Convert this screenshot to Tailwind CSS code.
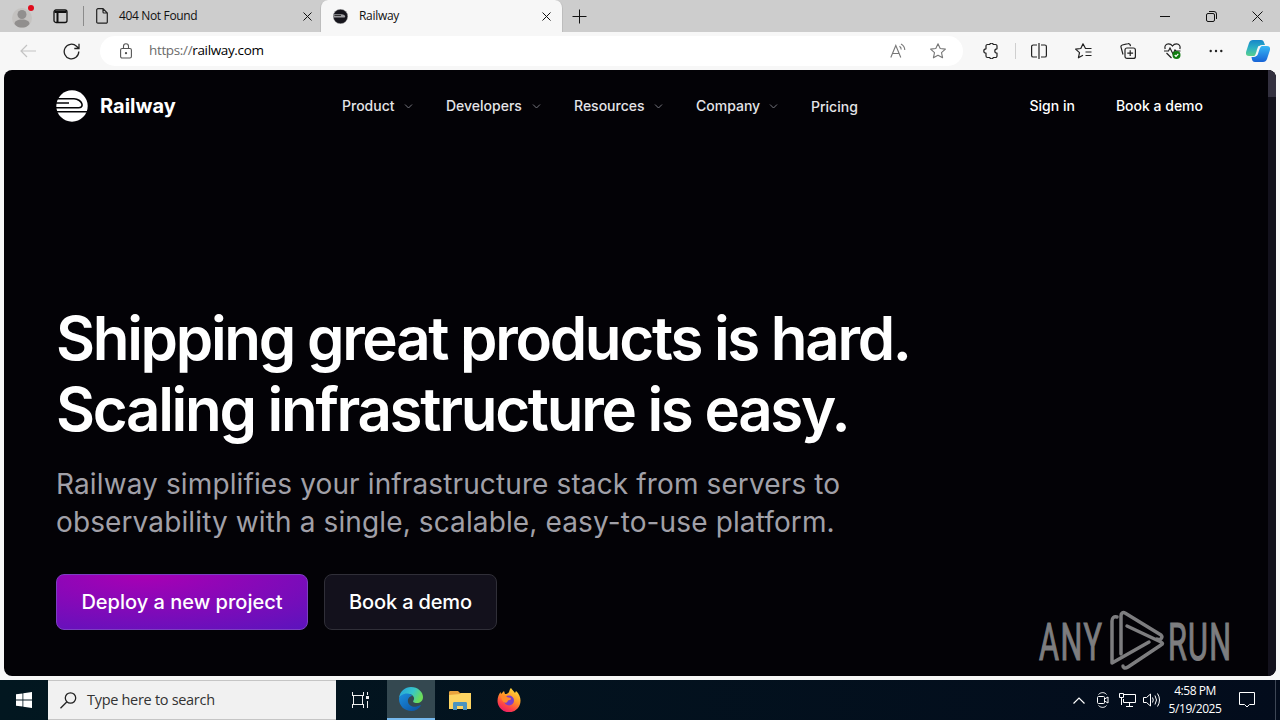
<!DOCTYPE html>
<html lang="en">
  <head>
    <meta charset="UTF-8" />
    <meta name="viewport" content="width=device-width, initial-scale=1.0" />
    <script src="https://cdn.jsdelivr.net/npm/@tailwindcss/browser@4"></script>
    <title>Railway</title>
  </head>
  <body class="flex flex-col w-[1280px] h-[720px] overflow-hidden bg-[#f7f7f7] font-['Open_Sans','Noto_Sans',sans-serif] text-[#111]">
    <!-- tab strip -->
    <div class="flex h-8 bg-[#cdcdcd] text-[12px] shrink-0">
      <div class="flex items-center w-[82px] pl-3 border-r border-transparent">
        <svg class="w-6 h-7" viewBox="0 0 24 28" fill="none">
          <circle cx="10" cy="16" r="10" fill="#c4c2c0" />
          <circle cx="10" cy="12.500" r="4.500" fill="#918f8e" />
          <path d="M2.500 22c0-3 3-4.500 7.500-4.500s7.500 1.500 7.500 4.500c-2 3-5 3.500-7.500 3.500S4.500 25 2.500 22z" fill="#918f8e" />
          <circle cx="19" cy="6" r="3" fill="#e00b1c" />
        </svg>
        <svg class="w-[15px] h-[15px] ml-[17px]" viewBox="0 0 15 15" fill="none" stroke="#111" stroke-width="1.300">
          <rect x="1" y="1" width="13" height="12.500" rx="2" />
          <path d="M1.500 3h12M4.500 4v9.500" stroke-width="2" />
        </svg>
      </div>
      <div class="flex items-center w-[238px] pr-2">
        <div class="w-px h-5 bg-[#8b8b8b] ml-px"></div>
        <svg class="w-3 h-4 ml-3" viewBox="0 0 12 16" fill="none" stroke="#222" stroke-width="1.200">
          <path d="M2 .7h5l4.300 4.300v9a1.200 1.200 0 0 1-1.200 1.200H2A1.200 1.200 0 0 1 .7 14V2A1.300 1.300 0 0 1 2 .7zM7 .7V4a1 1 0 0 0 1 1h3.300" />
        </svg>
        <span class="ml-[11px] tracking-[-0.35px]">404 Not Found</span>
        <svg class="w-[9px] h-[9px] ml-auto" viewBox="0 0 9 9" stroke="#111"><path d="M.5.5l8 8M8.500.5l-8 8" /></svg>
      </div>
      <div class="flex items-center w-[243px] pl-3 pr-[11px] bg-[#f7f7f7] rounded-t-lg border-x border-[#bdbdbd]">
        <svg class="w-[15px] h-[15px]" viewBox="0 0 32 32">
          <circle cx="16" cy="16" r="15.500" fill="#16151c" stroke="#bbb" />
          <path d="M1 11h17c5 0 8 3 8 5s-1 2-3 2H1z" fill="#a0a0a4" />
          <path d="M3 14h14" stroke="#222" stroke-width="2" />
        </svg>
        <span class="ml-[11px] tracking-[-0.3px]">Railway</span>
        <svg class="w-[9px] h-[9px] ml-auto" viewBox="0 0 9 9" stroke="#111"><path d="M.5.5l8 8M8.500.5l-8 8" /></svg>
      </div>
      <div class="flex items-center grow pl-[9px] pr-[17px]">
        <svg class="w-[15px] h-[15px]" viewBox="0 0 15 15" stroke="#111"><path d="M7.500 0.500v14M.5 7.500h14" /></svg>
        <svg class="w-[10px] h-[10px] ml-auto" viewBox="0 0 10 10" stroke="#111"><path d="M0 5.500h10" /></svg>
        <svg class="w-[11px] h-[11px] ml-9" viewBox="0 0 11 11" fill="none" stroke="#111">
          <rect x=".5" y="2.500" width="8" height="8" rx="1.500" />
          <path d="M3 .5h5A2.500 2.500 0 0 1 10.500 3v5" />
        </svg>
        <svg class="w-[11px] h-[11px] ml-[35px]" viewBox="0 0 11 11" stroke="#111"><path d="M.5.5l10 10M10.500.5l-10 10" /></svg>
      </div>
    </div>

    <!-- toolbar -->
    <div class="flex items-center h-[38px] shrink-0 pl-5">
      <svg class="w-4 h-[14px]" viewBox="0 0 16 14" fill="none" stroke="#c3c3c3" stroke-width="1.200"><path d="M16 7H1M7 1L1 7l6 6" /></svg>
      <svg class="w-[17px] h-[17px] ml-[27px]" viewBox="0 0 17 17" fill="none" stroke="#222" stroke-width="1.300">
        <path d="M15.800 8.500a7.300 7.300 0 1 1-2.300-5.300L16 5.500M16 .8v4.700h-4.700" />
      </svg>
      <div class="flex items-center w-[863px] h-[30px] ml-5 pl-5 pr-[17px] rounded-full bg-white">
        <svg class="w-3 h-4" viewBox="0 0 12 16" fill="none" stroke="#555" stroke-width="1.100">
          <rect x=".6" y="5.500" width="10.800" height="9.500" rx="1.500" />
          <path d="M3.500 5.500V3.300a2.500 2.500 0 0 1 5 0v2.200" />
          <circle cx="6" cy="10.200" r=".6" fill="#555" />
        </svg>
        <span class="ml-[17px] text-[13.500px] tracking-[-0.35px] leading-none"><span class="text-[#6b6b6b]">https://</span><span class="text-black">railway.com</span></span>
        <svg class="w-4 h-4 ml-auto" viewBox="0 0 16 16" fill="none" stroke="#777" stroke-width="1.100">
          <path d="M.8 14.500L5.800 2.500l5 12M2.500 10.500h6.600M9.500 3.200a4 4 0 0 1 1.700 3.300M11 1a7 7 0 0 1 3.800 6" />
        </svg>
        <svg class="w-4 h-4 ml-6" viewBox="0 0 16 16" fill="none" stroke="#777" stroke-width="1.100" stroke-linejoin="round">
          <path d="M8 .8l2.200 4.700 5.200.6-3.900 3.500 1.100 5.200L8 12.200l-4.600 2.600 1.100-5.200L.6 6.100l5.200-.6z" />
        </svg>
      </div>
      <svg class="w-4 h-4 ml-5" viewBox="0 0 16 16" fill="none" stroke="#222" stroke-width="1.200" stroke-linejoin="round">
        <path d="M4.500 1.500h2.200a1.900 1.900 0 0 1 3.600 0h2.200a1.500 1.500 0 0 1 1.500 1.500v2.800a2 2 0 1 0 0 4.400V13a1.500 1.500 0 0 1-1.500 1.500h-2.200a1.900 1.900 0 0 1-3.600 0H4.500A1.500 1.500 0 0 1 3 13v-2.800a2.100 2.100 0 0 1 0-4.400V3a1.500 1.500 0 0 1 1.500-1.500z" />
      </svg>
      <div class="w-px h-4 ml-4 bg-[#cfcfcf]"></div>
      <svg class="w-4 h-4 ml-[15px]" viewBox="0 0 16 16" fill="none" stroke="#222" stroke-width="1.200">
        <path d="M8 0v16M6 2H2.200A1.600 1.600 0 0 0 .6 3.600v8.800A1.600 1.600 0 0 0 2.200 14H6M10 2h3.800a1.600 1.600 0 0 1 1.600 1.600v8.800a1.600 1.600 0 0 1-1.600 1.600H10" />
      </svg>
      <svg class="w-[17px] h-4 ml-7" viewBox="0 0 17 16" fill="none" stroke="#222" stroke-width="1.200" stroke-linejoin="round">
        <path d="M16.500 5.500h-6L8 .8 5.800 5.500.6 6.100l3.900 3.500-1.100 5.200L8 12.200M10.500 9h6M10.500 12.500h6" />
      </svg>
      <svg class="w-4 h-4 ml-7" viewBox="0 0 16 16" fill="none" stroke="#222" stroke-width="1.200">
        <rect x="5" y="5" width="10.400" height="10.400" rx="2" />
        <path d="M10.200 7.300v5.800M7.300 10.200h5.800M3 11.500L1 4.200a1.800 1.800 0 0 1 1.300-2.200L8 .7a1.800 1.800 0 0 1 2.200 1.300l.3 1.200" />
      </svg>
      <svg class="w-[17px] h-4 ml-7" viewBox="0 0 17 16" fill="none" stroke="#222" stroke-width="1.200">
        <path d="M1.200 6C.2 3 2 .8 4.500.8c1.700 0 3 .7 4 2.200 1-1.500 2.300-2.200 4-2.200 2.500 0 4.300 2.200 3.300 5.200M0 8h4.500L6 5l3 6 2-4 1 1h4.500M2.500 10l5 5" />
        <circle cx="12.500" cy="12" r="4" fill="#107c10" stroke="none" />
        <path d="M10.700 12l1.300 1.300 2.300-2.500" stroke="#fff" />
      </svg>
      <svg class="w-[14px] h-1 ml-7" viewBox="0 0 14 4" fill="#222"><circle cx="1.700" cy="2" r="1.200" /><circle cx="7" cy="2" r="1.200" /><circle cx="12.300" cy="2" r="1.200" /></svg>
      <svg class="w-6 h-[22px] ml-[23px]" viewBox="0 0 24 22" fill="none">
        <defs>
          <linearGradient id="copilotLeft" x1="0" y1="0" x2="0" y2="1"><stop offset="0" stop-color="#1686c9" /><stop offset=".5" stop-color="#2cb0c4" /><stop offset="1" stop-color="#5ad08c" /></linearGradient>
          <linearGradient id="copilotRight" x1="0" y1="0" x2="0" y2="1"><stop offset="0" stop-color="#37b8f5" /><stop offset="1" stop-color="#1763d6" /></linearGradient>
        </defs>
        <path d="M7 0h8c2 0 2.500 1 3 2.500L19 5h-3c-2 0-3 1-3.500 3l-2 6c-.5 1.500-1.500 2-3 2H3c-3 0-3.500-2-2.800-4.500L3 3C3.700 1 5 0 7 0z" fill="url(#copilotLeft)" />
        <path d="M17 22H9c-2 0-2.500-1-3-2.500L5.500 17h2c2 0 3-1 3.500-3l2-6c.5-1.500 1.500-2 3-2h5c3 0 3.500 2 2.800 4.500L21 19c-.7 2-2 3-4 3z" fill="url(#copilotRight)" />
        <path d="M12.500 6h3.300c-1.500.8-2 2.300-2.500 3.800l-1.300 4c-.6 1.800-1.500 2.500-4 2.700 2.500-2 2.500-7.500 4.500-10.500z" fill="#f7f7f7" />
      </svg>
    </div>

    <!-- page -->
    <div class="relative flex w-[1272px] h-[606px] mx-1 shrink-0 rounded-lg overflow-hidden bg-[#030206] text-white font-[Inter,sans-serif]">
      <div class="w-[1264px] px-[52px]">
        <div class="flex items-center h-[72px] text-[14px] font-medium text-[#e4e4e8] leading-5">
          <svg class="w-8 h-8" viewBox="0 0 32 32">
            <circle cx="16" cy="16" r="15.700" fill="#fff" />
            <path d="M1 8.700h17c4 0 7.500 3 8 5.500s-1 3.600-3.500 3.600H0M0 13h13M0 21.700h32" fill="none" stroke="#050507" stroke-width="1.600" />
          </svg>
          <span class="w-[242px] ml-3 text-[20px] font-bold text-white leading-7">Railway</span>
          <div class="flex w-[469px]">
            <div class="flex items-center w-[104px]"><span class="w-[62px]">Product</span><svg class="w-[9px] h-[5px]" viewBox="0 0 9 5" fill="none" stroke="#77767e"><path d="M1 .5l3.500 3.500L8 .5" /></svg></div>
            <div class="flex items-center w-[128px]"><span class="w-[86px]">Developers</span><svg class="w-[9px] h-[5px]" viewBox="0 0 9 5" fill="none" stroke="#77767e"><path d="M1 .5l3.500 3.500L8 .5" /></svg></div>
            <div class="flex items-center w-[122px]"><span class="w-[80px]">Resources</span><svg class="w-[9px] h-[5px]" viewBox="0 0 9 5" fill="none" stroke="#77767e"><path d="M1 .5l3.500 3.500L8 .5" /></svg></div>
            <div class="flex items-center w-[115px]"><span class="w-[73px]">Company</span><svg class="w-[9px] h-[5px]" viewBox="0 0 9 5" fill="none" stroke="#77767e"><path d="M1 .5l3.500 3.500L8 .5" /></svg></div>
          </div>
          <span class="pt-0.5">Pricing</span>
          <span class="ml-auto text-white">Sign in</span>
          <span class="ml-[41px] mr-[13px] text-white">Book a demo</span>
        </div>

        <h1 class="mt-[161px] text-[60px] leading-[71px] font-semibold tracking-[-2.28px] whitespace-nowrap">Shipping great products is hard.<br />Scaling infrastructure is easy.</h1>
        <p class="mt-5 text-[28px] leading-[38px] tracking-[0.12px] text-[#a1a0a8] whitespace-nowrap">Railway simplifies your infrastructure stack from servers to<br />observability with a single, scalable, easy-to-use platform.</p>
        <div class="flex gap-4 mt-[33px] text-[20px] font-medium">
          <a href="#" class="flex items-center justify-center w-[252px] h-14 rounded-lg border border-[#7c3fc0] bg-[radial-gradient(110%_130%_at_35%_0%,#a800b4,#5a14bd)]">Deploy a new project</a>
          <a href="#" class="flex items-center justify-center w-[173px] h-14 rounded-lg border border-[#302f38] bg-[#13111c] tracking-[-0.15px]">Book a demo</a>
        </div>
      </div>
      <div class="w-2 bg-[#13111c]"><div class="h-[27px] bg-[#33303f]"></div></div>

      <!-- watermark -->
      <svg class="absolute left-[1034px] top-[538px] w-[210px] h-16 overflow-visible" viewBox="0 0 210 64" fill="none">
        <g fill="#7d7d7f" stroke="#7d7d7f" stroke-width="1.200" font-family="Roboto" font-size="51">
          <text transform="translate(1 52) scale(.6 1)" textLength="105" lengthAdjust="spacing">ANY</text>
          <text transform="translate(130 52) scale(.6 1)" textLength="105" lengthAdjust="spacing">RUN</text>
        </g>
        <g stroke="#7d7d7f" stroke-width="3.500" stroke-linejoin="round" stroke-linecap="round">
          <path d="M79 9c-3-1-5 1-5 4v42l37-21" />
          <path d="M83 46V8c0-3 2-4 4-3l36 22c2 2 0 6-4 4" />
          <path d="M89 18l34 16c2 1 2 2 0 3L90 59c-3 2-5 1-5-1" />
        </g>
      </svg>
    </div>

    <!-- taskbar -->
    <div class="flex items-center h-10 mt-1 shrink-0 bg-linear-to-r from-[#021720] to-[#030c1c] text-white">
      <div class="flex items-center justify-center w-12">
        <svg class="w-4 h-4" viewBox="0 0 16 16" fill="#fff"><path d="M0 2.300L6.500 1.400v6.200H0zM7.300 1.300L16 0v7.600H7.300zM0 8.400h6.500v6.200L0 13.700zM7.300 8.400H16V16l-8.700-1.300z" /></svg>
      </div>
      <div class="flex items-center w-72 h-full pl-3 bg-[#f1f1f1] border-y border-[#c5c5c5] text-[#333]">
        <svg class="w-[17px] h-[17px]" viewBox="0 0 17 17" fill="none" stroke="#222" stroke-width="1.300"><circle cx="10.500" cy="6" r="5.200" /><path d="M6.700 10L.5 16.200" /></svg>
        <span class="ml-[10px] text-[14.500px] tracking-[-0.3px]">Type here to search</span>
      </div>
      <div class="flex items-center justify-center w-[51px] pr-[3px]">
        <svg class="w-[17px] h-4" viewBox="0 0 17 16" fill="none" stroke="#eee"><path d="M.5 0v3M11.500 0v3M0 3.500h12M0 12.500h12M.5 13v3M11.500 13v3M1.500 4v8M10.500 4v8M15.500 0v3M15.500 9v7" /><path d="M14 5.500h3" stroke-width="3" /></svg>
      </div>
      <div class="flex items-center justify-center w-12 h-full bg-[#344850] border-b-2 border-[#76b9ed]">
        <svg class="w-6 h-6" viewBox="0 0 24 24">
          <defs>
            <linearGradient id="edgeTop" x1="0" y1="0" x2="1" y2=".4"><stop offset="0" stop-color="#249fdf" /><stop offset=".6" stop-color="#37c6c9" /><stop offset="1" stop-color="#6bdc5a" /></linearGradient>
            <linearGradient id="edgeLow" x1="0" y1="0" x2="1" y2="1"><stop offset="0" stop-color="#1b8ede" /><stop offset="1" stop-color="#0c4f9e" /></linearGradient>
          </defs>
          <path d="M0 11C1 4 6 0 12 0c7 0 12 5 12 10 0 4-3 6-6 6-3.500 0-4.500-1.300-3.500-2.500 2-3-1-6.500-5-6.500C5 7 1.500 9 0 11z" fill="url(#edgeTop)" />
          <path d="M0 12c0-3 4-5.500 8-5.500 3 0 5 1.500 5 2.500-3 .5-4.500 3-4 6 .6 3.500 5 5.500 8.500 4.500 2-.5 4-1.500 4.500-1-2 3.500-5.500 5.500-9.500 5.500C5.500 24 0 19 0 12z" fill="url(#edgeLow)" />
        </svg>
      </div>
      <div class="flex items-center justify-center w-[49px]">
        <svg class="w-[22px] h-[19px]" viewBox="0 0 22 19">
          <path d="M0 1.500C0 .5.500 0 1.500 0H9l2 2h11v16H0z" fill="#e8a33d" />
          <path d="M0 4l11-1 1-1h10v16H0z" fill="#fcd462" />
          <path d="M4 19v-6.500c0-1 .5-1.500 1.500-1.500h11c1 0 1.500.5 1.500 1.500V19h-4v-4H8v4z" fill="#4b94bf" />
        </svg>
      </div>
      <div class="flex items-center justify-center w-[49px]">
        <svg class="w-6 h-6" viewBox="0 0 24 24">
          <defs><linearGradient id="fox" x1=".8" y1="0" x2=".3" y2="1"><stop offset="0" stop-color="#ffe23e" /><stop offset=".45" stop-color="#ff9526" /><stop offset=".75" stop-color="#ff4545" /><stop offset="1" stop-color="#e91b67" /></linearGradient></defs>
          <path d="M14 0c1 2 3 3 4 5l1-2c3 2.500 4.500 6 4.500 9.500A11.500 11.500 0 0 1 .5 13C.5 9 2 6 3.500 4l.5 2 3-3 1 3c2 0 3-.5 4-2 .5-1.500.8-3 2-4z" fill="url(#fox)" />
          <circle cx="12" cy="12.500" r="5" fill="#7b3fc8" />
          <path d="M4 8c3-1 5 0 7 1.500 2 0 3 .5 3 1.500s-3 1-3.500 2.500C10 15 8 15 6.500 14 5 12.500 4 10 4 8z" fill="#ff8a2a" />
        </svg>
      </div>
      <svg class="w-3 h-[7px] ml-auto" viewBox="0 0 12 7" fill="none" stroke="#fff" stroke-width="1.200"><path d="M.5 6.500L6 1l5.500 5.500" /></svg>
      <svg class="w-3 h-4 ml-3" viewBox="0 0 12 16" fill="none" stroke="#fff"><rect x=".5" y="4.500" width="7" height="7" rx="1" /><path d="M7.500 7l3.500-2v6l-3.500-2M1.500 2.500c2.500-2.500 6-2.500 8 0M1.500 13.500c2.500 2.500 6 2.500 8 0" /></svg>
      <svg class="w-[17px] h-[14px] ml-[10px]" viewBox="0 0 17 14" fill="none" stroke="#fff"><path d="M5 1.500h11.500v8H4.500V6M10.500 10v3M7 13.500h7M.5.5h4v4h-4zM2.500 5v7" /></svg>
      <svg class="w-[17px] h-[14px] ml-[7px]" viewBox="0 0 17 14" fill="none" stroke="#fff"><path d="M.5 4.500h3l4-3.500v12l-4-3.500h-3zM9.500 4.500q1.500 2.500 0 5M12 2.500q3 4.500 0 9M14.500.5q4 6.500 0 13" /></svg>
      <div class="w-[70px] text-center text-[12px] leading-[18px] tracking-[-0.45px]">4:58 PM<br />5/19/2025</div>
      <svg class="w-4 h-4 ml-[9px] mr-[20px]" viewBox="0 0 16 16" fill="none" stroke="#fff"><path d="M.5.500h15v12h-5L8 15l-2.500-2.500h-5z" /></svg>
      <div class="w-px h-full mr-1 bg-[#3d4655]"></div>
    </div>
  </body>
</html>
